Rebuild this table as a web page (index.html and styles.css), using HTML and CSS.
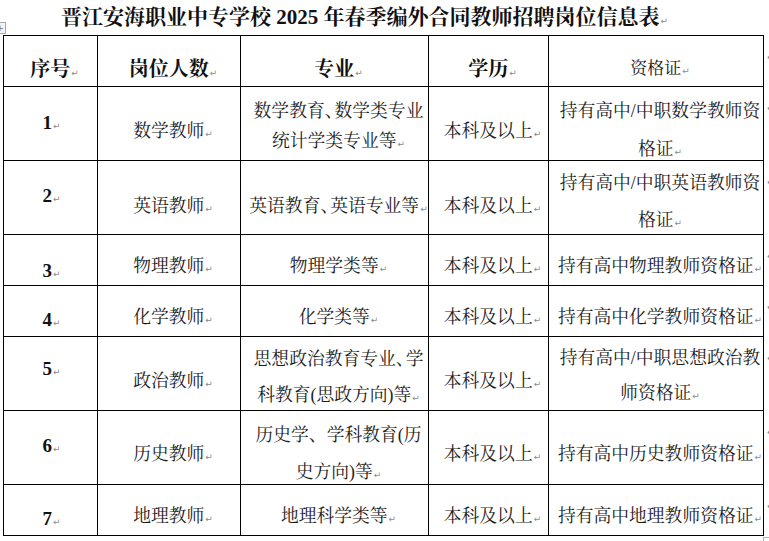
FILE: index.html
```html
<!DOCTYPE html>
<html lang="zh-CN">
<head>
<meta charset="utf-8">
<title>招聘岗位信息表</title>
<link rel="stylesheet" href="styles.css">
</head>
<body>
<div class="page">
  <h1 class="title">晋江安海职业中专学校 2025 年春季编外合同教师招聘岗位信息表<span class="pm">↵</span></h1>
  <div class="move-handle"><span>+</span></div>
  <table class="jobs">
    <colgroup>
      <col class="w-num"><col class="w-post"><col class="w-major"><col class="w-edu"><col class="w-cert"><col class="w-eor">
    </colgroup>
    <tr class="head">
      <th class="h"><div class="in">序号<span class="pm">↵</span></div></th>
      <th class="h"><div class="in">岗位人数<span class="pm">↵</span></div></th>
      <th class="h"><div class="in">专业<span class="pm">↵</span></div></th>
      <th class="h"><div class="in">学历<span class="pm">↵</span></div></th>
      <th class="h reg"><div class="in">资格证<span class="pm">↵</span></div></th>
      <td class="eor"><div class="in"><span class="pm">↵</span></div></td>
    </tr>
    <tr class="tall r1">
      <td class="num"><div class="in">1<span class="pm">↵</span></div></td>
      <td class="single"><div class="in">数学教师<span class="pm">↵</span></div></td>
      <td class="multi lh30"><div class="in">数学教育<span class="pc">、</span>数学类专业<br>统计学类专业等<span class="pm">↵</span></div></td>
      <td class="single"><div class="in">本科及以上<span class="pm">↵</span></div></td>
      <td class="multi cert lh38"><div class="in">持有高中/中职数学教师资<br>格证<span class="pm">↵</span></div></td>
      <td class="eor"><div class="in"><span class="pm">↵</span></div></td>
    </tr>
    <tr class="tall r2">
      <td class="num"><div class="in">2<span class="pm">↵</span></div></td>
      <td class="single"><div class="in">英语教师<span class="pm">↵</span></div></td>
      <td class="single"><div class="in">英语教育<span class="pc">、</span>英语专业等<span class="pm">↵</span></div></td>
      <td class="single"><div class="in">本科及以上<span class="pm">↵</span></div></td>
      <td class="multi cert lh37"><div class="in">持有高中/中职英语教师资<br>格证<span class="pm">↵</span></div></td>
      <td class="eor"><div class="in"><span class="pm">↵</span></div></td>
    </tr>
    <tr class="short r3">
      <td class="num"><div class="in">3<span class="pm">↵</span></div></td>
      <td class="single"><div class="in">物理教师<span class="pm">↵</span></div></td>
      <td class="single"><div class="in">物理学类等<span class="pm">↵</span></div></td>
      <td class="single"><div class="in">本科及以上<span class="pm">↵</span></div></td>
      <td class="single cert"><div class="in">持有高中物理教师资格证<span class="pm">↵</span></div></td>
      <td class="eor"><div class="in"><span class="pm">↵</span></div></td>
    </tr>
    <tr class="short r4">
      <td class="num"><div class="in">4<span class="pm">↵</span></div></td>
      <td class="single"><div class="in">化学教师<span class="pm">↵</span></div></td>
      <td class="single"><div class="in">化学类等<span class="pm">↵</span></div></td>
      <td class="single"><div class="in">本科及以上<span class="pm">↵</span></div></td>
      <td class="single cert"><div class="in">持有高中化学教师资格证<span class="pm">↵</span></div></td>
      <td class="eor"><div class="in"><span class="pm">↵</span></div></td>
    </tr>
    <tr class="tall r5">
      <td class="num"><div class="in">5<span class="pm">↵</span></div></td>
      <td class="single"><div class="in">政治教师<span class="pm">↵</span></div></td>
      <td class="multi lh36"><div class="in">思想政治教育专业<span class="pc">、</span>学<br>科教育(思政方向)等<span class="pm">↵</span></div></td>
      <td class="single"><div class="in">本科及以上<span class="pm">↵</span></div></td>
      <td class="multi cert lh35"><div class="in">持有高中/中职思想政治教<br>师资格证<span class="pm">↵</span></div></td>
      <td class="eor"><div class="in"><span class="pm">↵</span></div></td>
    </tr>
    <tr class="tall r6">
      <td class="num"><div class="in">6<span class="pm">↵</span></div></td>
      <td class="single"><div class="in">历史教师<span class="pm">↵</span></div></td>
      <td class="multi lh37 top6"><div class="in">历史学、学科教育(历<br>史方向)等<span class="pm">↵</span></div></td>
      <td class="single"><div class="in">本科及以上<span class="pm">↵</span></div></td>
      <td class="single cert"><div class="in">持有高中历史教师资格证<span class="pm">↵</span></div></td>
      <td class="eor"><div class="in"><span class="pm">↵</span></div></td>
    </tr>
    <tr class="short r7">
      <td class="num"><div class="in">7<span class="pm">↵</span></div></td>
      <td class="single"><div class="in">地理教师<span class="pm">↵</span></div></td>
      <td class="single"><div class="in">地理科学类等<span class="pm">↵</span></div></td>
      <td class="single"><div class="in">本科及以上<span class="pm">↵</span></div></td>
      <td class="single cert"><div class="in">持有高中地理教师资格证<span class="pm">↵</span></div></td>
      <td class="eor"><div class="in"><span class="pm">↵</span></div></td>
    </tr>
  </table>
  <div class="resize-handle"></div>
</div>
</body>
</html>
```
FILE: styles.css
```css
html, body {
  margin: 0;
  padding: 0;
  background: #ffffff;
}

.page {
  position: relative;
  width: 769px;
  height: 541px;
  overflow: hidden;
  color: #1c1c1c;
  font-family: "Liberation Serif", "Noto Serif CJK SC", "Noto Sans CJK SC", serif;
}

.title {
  margin: 0;
  height: 35px;
  line-height: 35px;
  padding-left: 61px;
  font-size: 21px;
  font-weight: 700;
  white-space: nowrap;
  color: #111;
}

.pm {
  font-family: "DejaVu Sans", sans-serif;
  font-size: 9px;
  font-weight: 400;
  color: #8c8c8c;
  margin-left: 1px;
  line-height: 1;
}

/* Word-style compressed punctuation */
.pc {
  letter-spacing: -8px;
}

.move-handle {
  position: absolute;
  left: -6px;
  top: 22px;
  width: 10px;
  height: 10px;
  border: 1px solid #a8a8a8;
  background: #f4f4f4;
  font-family: "DejaVu Sans", sans-serif;
  font-size: 9px;
  line-height: 10px;
  text-align: center;
  color: #777;
}

.resize-handle {
  position: absolute;
  left: 763px;
  top: 537px;
  width: 7px;
  height: 7px;
  border: 1px solid #b0b0b0;
  background: #fff;
}

.jobs {
  margin-left: 3px;
  border-collapse: collapse;
  table-layout: fixed;
  width: 766px;
}

.w-num { width: 94px; }
.w-post { width: 143px; }
.w-major { width: 188px; }
.w-edu { width: 120px; }
.w-cert { width: 215px; }
.w-eor { width: 6px; }

.jobs th,
.jobs td {
  border: 1px solid #000;
  padding: 0;
  text-align: center;
  vertical-align: top;
  white-space: nowrap;
  font-size: 17.8px;
  font-weight: 400;
  line-height: 20px;
}

.jobs .in {
  box-sizing: border-box;
  padding: 0 0 0 8px;
  overflow: visible;
}

.head .in,
.short .in { height: 50px; }
.tall .in { height: 73px; }

.jobs td.eor {
  border: none;
  text-align: left;
  overflow: hidden;
}

.jobs td.eor .in { padding: 8px 0 0 2px; }

.jobs th.h {
  font-size: 20px;
  font-weight: 700;
  color: #111;
}

.jobs th.h .in { padding-top: 23px; }

.jobs th.h.reg {
  font-size: 17px;
  font-weight: 400;
}

.jobs td.num {
  font-family: "Liberation Serif", serif;
  font-size: 19px;
  font-weight: 700;
  color: #111;
}

.jobs td.num .in { padding-left: 2px; }
.tall td.num .in { padding-top: 25px; }
.r1 td.num .in { padding-top: 26px; }
.r5 td.num .in { padding-top: 22px; }
.short td.num .in { padding-top: 24px; }
.r3 td.num .in { padding-top: 26px; }

.tall td.single .in { padding-top: 34px; }
.r2 td.single .in { padding-top: 35px; }
.r6 td.single .in { padding-top: 33px; }
.short td.single .in { padding-top: 21px; }

.jobs td.multi .in { padding-top: 4px; }
.jobs td.lh30 { line-height: 30px; }
.jobs td.lh30 .in { padding-top: 9px; }
.jobs td.lh35 { line-height: 35px; }
.jobs td.lh35 .in { padding-top: 4px; }
.jobs td.lh36 { line-height: 36px; }
.jobs td.lh36 .in { padding-top: 4px; }
.jobs td.lh37 { line-height: 37px; }
.jobs td.lh37 .in { padding-top: 4px; }
.jobs td.lh38 { line-height: 38px; }
.jobs td.lh38 .in { padding-top: 5px; }
.jobs td.top6 .in { padding-top: 6px; }
```
